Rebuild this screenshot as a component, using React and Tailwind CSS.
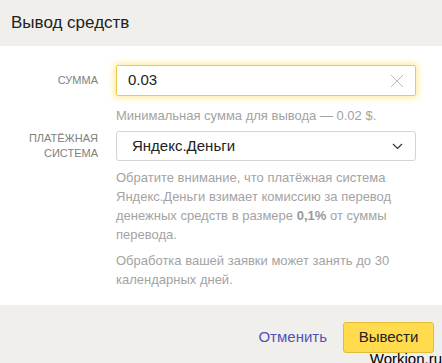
import { useState } from "react";

export default function App() {
    const [amount, setAmount] = useState("0.03");

    return (
        <div className="relative w-[442px] h-[363px] bg-white overflow-hidden font-['Liberation_Sans',Arial,sans-serif]">
            <div className="h-[46px] bg-[#f0efec] flex items-center pl-[11px]">
                <p className="text-[17px] text-[#222]">Вывод средств</p>
            </div>

            <div className="h-[259px] pt-[19px] grid grid-cols-[98px_300px] gap-x-[18px] content-start">
                <div className="h-[31px] flex items-center justify-end">
                    <span className="text-[11px] text-[#808080] uppercase">Сумма</span>
                </div>
                <div>
                    <div className="h-[31px] flex items-center border border-[#f0c94a] shadow-[0_0_6px_2px_rgba(255,221,80,0.55)] rounded-[2px] px-[11px]">
                        <input
                            value={amount}
                            onChange={(e) => setAmount(e.target.value)}
                            className="flex-1 outline-none text-[15px] text-[#222] bg-transparent"
                        />
                        <svg width="14" height="14" viewBox="0 0 14 14" className="text-[#bbb]">
                            <path d="M1 1L13 13M13 1L1 13" stroke="currentColor" strokeWidth="1" fill="none" />
                        </svg>
                    </div>
                    <p className="mt-[12px] text-[13px] text-[#a3a3a3] leading-[16px]">Минимальная сумма для вывода — 0.02 $.</p>
                </div>

                <div className="mt-[7px] h-[30px] flex flex-col items-end justify-center text-right text-[11px] leading-[15px] text-[#808080] uppercase">
                    <span>Платёжная</span>
                    <span>система</span>
                </div>
                <div className="mt-[7px]">
                    <div className="h-[30px] flex items-center justify-between border border-[#d4d4d4] rounded-[3px] pl-[15px] pr-[12px]">
                        <span className="text-[15px] text-[#222]">Яндекс.Деньги</span>
                        <svg width="11" height="7" viewBox="0 0 11 7">
                            <path d="M1 1l4.5 4.5L10 1" stroke="#333" strokeWidth="1.2" fill="none" />
                        </svg>
                    </div>
                    <p className="mt-[7px] text-[13px] leading-[19px] text-[#a3a3a3]">
                        Обратите внимание, что платёжная система Яндекс.Деньги взимает комиссию за перевод денежных средств в размере <b className="font-bold text-[#999]">0,1%</b> от суммы перевода.
                    </p>
                    <p className="mt-[7px] text-[13px] leading-[19px] text-[#a3a3a3]">
                        Обработка вашей заявки может занять до 30 календарных дней.
                    </p>
                </div>
            </div>

            <div className="h-[58px] bg-[#f0efec] flex items-center justify-end pr-[8px] pt-[6px]">
                <button className="text-[15px] text-[#5252b8] mr-[16px]">Отменить</button>
                <button className="h-[31px] w-[91px] rounded-[3px] bg-[#ffdb4d] border border-[#e0be35] text-[15px] text-[#222]">Вывести</button>
            </div>

            <span className="absolute right-0 bottom-[-4px] text-[15px] text-black leading-[16px]">Workion.ru</span>
        </div>
    );
}
